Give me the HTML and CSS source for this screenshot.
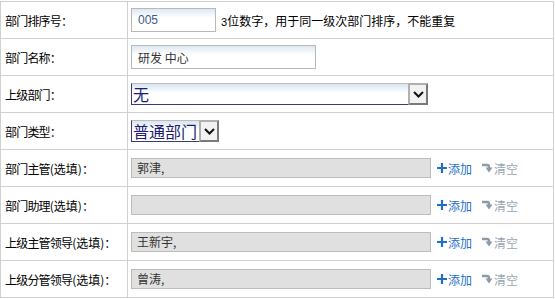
FILE: index.html
```html
<!DOCTYPE html>
<html lang="zh-CN">
<head>
    <meta charset="UTF-8">
    <title>部门信息</title>
    <link rel="stylesheet" href="styles.css">
</head>
<body>
    <table class="form-table">
        <tr>
            <th>部门排序号：</th>
            <td><input type="text" class="txt txt-short" value="005"><span class="hint"><span class="num">3</span>位数字，用于同一级次部门排序，不能重复</span></td>
        </tr>
        <tr>
            <th>部门名称：</th>
            <td><input type="text" class="txt txt-name" value="研发 中心"></td>
        </tr>
        <tr>
            <th>上级部门：</th>
            <td>
                <div class="select select-wide">
                    <select><option>无</option></select>
                    <span class="select-btn"><svg width="11" height="7" viewBox="0 0 11 7"><path d="M1 1 L5.5 5.5 L10 1" fill="none" stroke="#111" stroke-width="2"/></svg></span>
                </div>
            </td>
        </tr>
        <tr>
            <th>部门类型：</th>
            <td>
                <div class="select">
                    <select><option>普通部门</option></select>
                    <span class="select-btn"><svg width="11" height="7" viewBox="0 0 11 7"><path d="M1 1 L5.5 5.5 L10 1" fill="none" stroke="#111" stroke-width="2"/></svg></span>
                </div>
            </td>
        </tr>
        <tr>
            <th>部门主管<span class="opt">(选填)</span>：</th>
            <td><span class="pick">郭津,</span><a href="#" class="act act-add"><svg width="10" height="10" viewBox="0 0 10 10"><path d="M0 5 H10 M5 0 V10" stroke="#1f6fc8" stroke-width="2.2"/></svg>添加</a><a href="#" class="act act-clear"><svg width="11" height="10" viewBox="0 0 11 10"><path d="M0 2 H5 Q7 2 7 4 V5" fill="none" stroke="#8e9aa6" stroke-width="2.4"/><path d="M3.5 4.5 H10.5 L7 9.5 Z" fill="#8e9aa6"/></svg>清空</a></td>
        </tr>
        <tr>
            <th>部门助理<span class="opt">(选填)</span>：</th>
            <td><span class="pick"></span><a href="#" class="act act-add"><svg width="10" height="10" viewBox="0 0 10 10"><path d="M0 5 H10 M5 0 V10" stroke="#1f6fc8" stroke-width="2.2"/></svg>添加</a><a href="#" class="act act-clear"><svg width="11" height="10" viewBox="0 0 11 10"><path d="M0 2 H5 Q7 2 7 4 V5" fill="none" stroke="#8e9aa6" stroke-width="2.4"/><path d="M3.5 4.5 H10.5 L7 9.5 Z" fill="#8e9aa6"/></svg>清空</a></td>
        </tr>
        <tr>
            <th>上级主管领导<span class="opt">(选填)</span>：</th>
            <td><span class="pick">王新宇,</span><a href="#" class="act act-add"><svg width="10" height="10" viewBox="0 0 10 10"><path d="M0 5 H10 M5 0 V10" stroke="#1f6fc8" stroke-width="2.2"/></svg>添加</a><a href="#" class="act act-clear"><svg width="11" height="10" viewBox="0 0 11 10"><path d="M0 2 H5 Q7 2 7 4 V5" fill="none" stroke="#8e9aa6" stroke-width="2.4"/><path d="M3.5 4.5 H10.5 L7 9.5 Z" fill="#8e9aa6"/></svg>清空</a></td>
        </tr>
        <tr>
            <th>上级分管领导<span class="opt">(选填)</span>：</th>
            <td><span class="pick">曾涛,</span><a href="#" class="act act-add"><svg width="10" height="10" viewBox="0 0 10 10"><path d="M0 5 H10 M5 0 V10" stroke="#1f6fc8" stroke-width="2.2"/></svg>添加</a><a href="#" class="act act-clear"><svg width="11" height="10" viewBox="0 0 11 10"><path d="M0 2 H5 Q7 2 7 4 V5" fill="none" stroke="#8e9aa6" stroke-width="2.4"/><path d="M3.5 4.5 H10.5 L7 9.5 Z" fill="#8e9aa6"/></svg>清空</a></td>
        </tr>
    </table>
</body>
</html>
```

FILE: styles.css
```css
body {
    margin: 1px 0 0 0;
    font-family: "Noto Sans CJK SC", sans-serif;
    font-size: 12px;
    color: #000;
    background: #fff;
}

.form-table {
    border-collapse: collapse;
    width: 554px;
}

.form-table th,
.form-table td {
    border: 1px solid #d0d0d0;
    height: 36px;
    padding: 0;
    white-space: nowrap;
}

.form-table th {
    width: 122px;
    padding-left: 4px;
    text-align: left;
    font-weight: normal;
    font-size: 12px;
    letter-spacing: -0.8px;
}

.form-table td {
    padding-left: 3px;
}

.opt {
    letter-spacing: 0;
}

.txt {
    box-sizing: border-box;
    height: 24px;
    margin: 0;
    padding: 0 6px;
    border: 1px solid #b8b8b8;
    background: linear-gradient(#dde8f2, #fff 40%);
    font-family: "Noto Sans CJK SC", sans-serif;
    font-size: 12px;
    color: #333;
    vertical-align: middle;
    outline: none;
}

.txt-short {
    width: 85px;
    font-family: "Liberation Sans", sans-serif;
    color: #3b5a86;
}

.txt-name {
    width: 185px;
}

.hint {
    margin-left: 5px;
    vertical-align: middle;
}

.num {
    font-family: "Liberation Sans", sans-serif;
    font-size: 11px;
}

.select {
    display: inline-flex;
    box-sizing: border-box;
    height: 22px;
    border: 1px solid #3b3b7b;
    border-top-color: #bcbcbc;
    border-right: 0;
    background: linear-gradient(#d8e6ef, #fff 45%);
    vertical-align: middle;
}

.select-wide {
    width: 297px;
}

.select select {
    appearance: none;
    -webkit-appearance: none;
    flex: 1;
    margin: 0;
    padding: 0 1px;
    border: 0;
    background: transparent;
    font-family: "Noto Sans CJK SC", sans-serif;
    font-size: 16px;
    line-height: 20px;
    height: 20px;
    color: #1c1c70;
    outline: none;
}

.select-btn {
    display: flex;
    align-items: center;
    justify-content: center;
    box-sizing: border-box;
    width: 20px;
    margin-top: -1px;
    height: 22px;
    border: 2px solid;
    border-color: #b0b0b0 #7a7a7a #7a7a7a #b0b0b0;
    background: #f2f2f2;
}

.pick {
    display: inline-block;
    box-sizing: border-box;
    width: 300px;
    height: 20px;
    padding-left: 5px;
    border: 1px solid #bdbdb5;
    background: #e0e0e0;
    line-height: 18px;
    color: #333;
    vertical-align: middle;
}

.act {
    display: inline-flex;
    align-items: center;
    gap: 1px;
    text-decoration: none;
    vertical-align: middle;
}

.act-add {
    margin-left: 6px;
    color: #1f6fc8;
}

.act-clear {
    margin-left: 10px;
    color: #9aa6b2;
}
```
